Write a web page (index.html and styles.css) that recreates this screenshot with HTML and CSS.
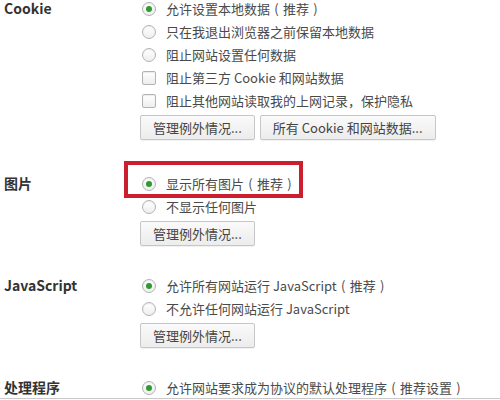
FILE: index.html
```html
<!DOCTYPE html>
<html lang="zh-CN">
<head>
  <meta charset="UTF-8" />
  <title>内容设置</title>
  <link rel="stylesheet" href="styles.css">
</head>
<body>
  <div class="frame">
    <div class="page">

      <section class="grupo grupo-cookie">
        <div class="titulo">Cookie</div>
        <div class="opcoes">
          <div class="opcao"><span class="radio marcado"></span>允许设置本地数据<span class="par">(</span>推荐<span class="par">)</span></div>
          <div class="opcao"><span class="radio"></span>只在我退出浏览器之前保留本地数据</div>
          <div class="opcao"><span class="radio"></span>阻止网站设置任何数据</div>
          <div class="opcao"><span class="caixa"></span>阻止第三方 Cookie 和网站数据</div>
          <div class="opcao"><span class="caixa"></span>阻止其他网站读取我的上网记录，保护隐私</div>
          <div class="botoes">
            <button class="botao">管理例外情况...</button>
            <button class="botao">所有 Cookie 和网站数据...</button>
          </div>
        </div>
      </section>

      <section class="grupo grupo-img">
        <div class="titulo">图片</div>
        <div class="opcoes">
          <div class="opcao"><span class="radio marcado"></span>显示所有图片<span class="par">(</span>推荐<span class="par">)</span></div>
          <div class="opcao"><span class="radio"></span>不显示任何图片</div>
          <div class="botoes">
            <button class="botao">管理例外情况...</button>
          </div>
        </div>
      </section>

      <section class="grupo grupo-js">
        <div class="titulo">JavaScript</div>
        <div class="opcoes">
          <div class="opcao"><span class="radio marcado"></span>允许所有网站运行 JavaScript<span class="par">(</span>推荐<span class="par">)</span></div>
          <div class="opcao"><span class="radio"></span>不允许任何网站运行 JavaScript</div>
          <div class="botoes">
            <button class="botao">管理例外情况...</button>
          </div>
        </div>
      </section>

      <section class="grupo">
        <div class="titulo">处理程序</div>
        <div class="opcoes">
          <div class="opcao"><span class="radio marcado"></span>允许网站要求成为协议的默认处理程序<span class="par">(</span>推荐设置<span class="par">)</span></div>
        </div>
      </section>

    </div>

    <!-- destaque vermelho sobre a opção de imagens -->
    <div class="destaque"></div>
  </div>
</body>
</html>
```

FILE: styles.css
```css
* {
  box-sizing: border-box;
}

body {
  margin: 0;
  background: #fff;
  font-family: "Noto Sans CJK SC", "Noto Sans", sans-serif;
  color: #4a4a4a;
}

.frame {
  position: relative;
  height: 399px;
  overflow: hidden;
  border-bottom: 1px solid #c9c9c9;
}

.page {
  margin-top: -3px;
}

.grupo {
  display: grid;
  grid-template-columns: 140px 1fr;
  margin-bottom: 30px;
}

.grupo-cookie {
  margin-bottom: 32px;
}

.grupo-img {
  margin-bottom: 28px;
}

.grupo-js {
  margin-bottom: 28px;
}

.titulo {
  padding: 3px 0 0 4px;
  font-size: 14px;
  font-weight: bold;
  line-height: 17px;
  color: #333;
}

.opcao {
  display: flex;
  align-items: center;
  height: 23px;
  font-size: 13px;
  line-height: 17px;
  white-space: nowrap;
}

.par {
  display: inline-block;
  width: 13px;
  text-align: center;
}

.radio,
.caixa {
  flex: none;
  width: 14px;
  height: 14px;
  margin: 0 10px 0 2px;
  border: 1px solid #b3b3b3;
  background: linear-gradient(#ffffff, #eeeeee);
  box-shadow: inset 0 1px 1px rgba(0, 0, 0, 0.08);
}

.radio {
  border-radius: 50%;
  display: flex;
  align-items: center;
  justify-content: center;
}

.radio.marcado::after {
  content: "";
  width: 6px;
  height: 6px;
  border-radius: 50%;
  background: #2f9a2f;
}

.caixa {
  border-radius: 2px;
}

.botoes {
  display: flex;
  gap: 5px;
  margin-top: 3px;
}

.botao {
  height: 25px;
  padding: 0 12px;
  font-family: inherit;
  font-size: 13px;
  color: #444;
  background: linear-gradient(#fafafa, #ececec);
  border: 1px solid #c6c6c6;
  border-radius: 2px;
  box-shadow: 0 1px 0 rgba(0, 0, 0, 0.05);
}

.destaque {
  position: absolute;
  left: 124px;
  top: 161px;
  width: 179px;
  height: 37px;
  border: 4px solid #cc1f2d;
}
```
